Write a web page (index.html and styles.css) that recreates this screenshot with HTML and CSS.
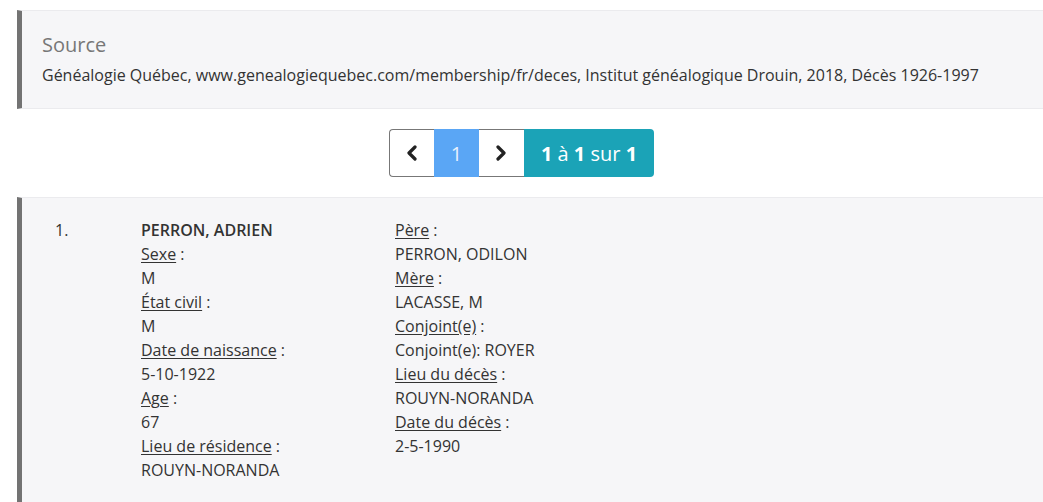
FILE: index.html
```html
<!DOCTYPE html>
<html lang="fr">
<head>
<meta charset="utf-8">
<title>Source</title>
<link rel="stylesheet" href="styles.css">
</head>
<body>
<div class="page">
  <div class="source-box">
    <h4 class="source-title">Source</h4>
    <p class="source-text">Généalogie Québec, www.genealogiequebec.com/membership/fr/deces, Institut généalogique Drouin, 2018, Décès 1926-1997</p>
  </div>

  <div class="pager">
    <a class="pg pg-prev" href="#" aria-label="Précédent">
      <svg width="12" height="16" viewBox="0 0 12 16"><polyline points="9,2 3,8 9,14" fill="none" stroke="#222" stroke-width="3.2" stroke-linecap="round" stroke-linejoin="round"/></svg>
    </a>
    <span class="pg pg-current">1</span>
    <a class="pg pg-next" href="#" aria-label="Suivant">
      <svg width="12" height="16" viewBox="0 0 12 16"><polyline points="3,2 9,8 3,14" fill="none" stroke="#222" stroke-width="3.2" stroke-linecap="round" stroke-linejoin="round"/></svg>
    </a>
    <span class="pg-info"><b>1</b> à <b>1</b> sur <b>1</b></span>
  </div>

  <div class="record">
    <div class="rec-num">1.</div>
    <div class="rec-col">
      <div class="rec-name">PERRON, ADRIEN</div>
      <div><u>Sexe</u> :</div>
      <div>M</div>
      <div><u>État civil</u> :</div>
      <div>M</div>
      <div><u>Date de naissance</u> :</div>
      <div>5-10-1922</div>
      <div><u>Age</u> :</div>
      <div>67</div>
      <div><u>Lieu de résidence</u> :</div>
      <div>ROUYN-NORANDA</div>
    </div>
    <div class="rec-col">
      <div><u>Père</u> :</div>
      <div>PERRON, ODILON</div>
      <div><u>Mère</u> :</div>
      <div>LACASSE, M</div>
      <div><u>Conjoint(e)</u> :</div>
      <div>Conjoint(e): ROYER</div>
      <div><u>Lieu du décès</u> :</div>
      <div>ROUYN-NORANDA</div>
      <div><u>Date du décès</u> :</div>
      <div>2-5-1990</div>
    </div>
  </div>
</div>
</body>
</html>
```

FILE: styles.css
```css
html, body {
  margin: 0;
  padding: 0;
  background: #fff;
  overflow: hidden;
}
body {
  font-family: "Open Sans", "Liberation Sans", sans-serif;
  color: #333;
  font-size: 16px;
}
.page {
  padding: 10px 0 0 17px;
}
.source-box {
  background: #f6f6f8;
  border-left: 5px solid #737373;
  border-top: 1px solid #ebebee;
  border-bottom: 1px solid #ebebee;
  margin-right: -30px;
  padding: 22px 20px 21px 20px;
}
.source-title {
  margin: 0;
  font-size: 20px;
  font-weight: 400;
  line-height: 24px;
  color: #777;
}
.source-text {
  margin: 6px 0 0 0;
  font-size: 16px;
  line-height: 24px;
  color: #333;
}
.pager {
  display: flex;
  justify-content: center;
  margin: 20px 0 0 -17px;
  height: 48px;
}
.pg {
  width: 45px;
  height: 48px;
  box-sizing: border-box;
  display: flex;
  align-items: center;
  justify-content: center;
  text-decoration: none;
  background: #fff;
  border-top: 1px solid #777;
  border-bottom: 1px solid #777;
}
.pg-prev {
  border-left: 1px solid #777;
  border-radius: 4px 0 0 4px;
}
.pg-current {
  background: #5aa6f5;
  border-color: #5aa6f5;
  color: #e6f1fd;
  font-size: 20px;
}
.pg-info {
  display: flex;
  align-items: center;
  padding: 0 17px;
  background: #1ba3b7;
  color: #fff;
  font-size: 20px;
  border-radius: 0 4px 4px 0;
  white-space: pre;
}
.pg-info b {
  font-weight: 700;
}
.record {
  margin-top: 20px;
  margin-right: -30px;
  background: #f6f6f8;
  border-left: 5px solid #737373;
  border-top: 1px solid #ebebee;
  padding: 20px 0 40px 33px;
  display: grid;
  grid-template-columns: 86px 254px 254px;
  line-height: 24px;
  font-size: 16px;
  color: #333;
}
.rec-name {
  font-weight: 600;
  font-size: 16px;
}
u {
  text-decoration: underline;
  text-underline-offset: 2px;
}
```
